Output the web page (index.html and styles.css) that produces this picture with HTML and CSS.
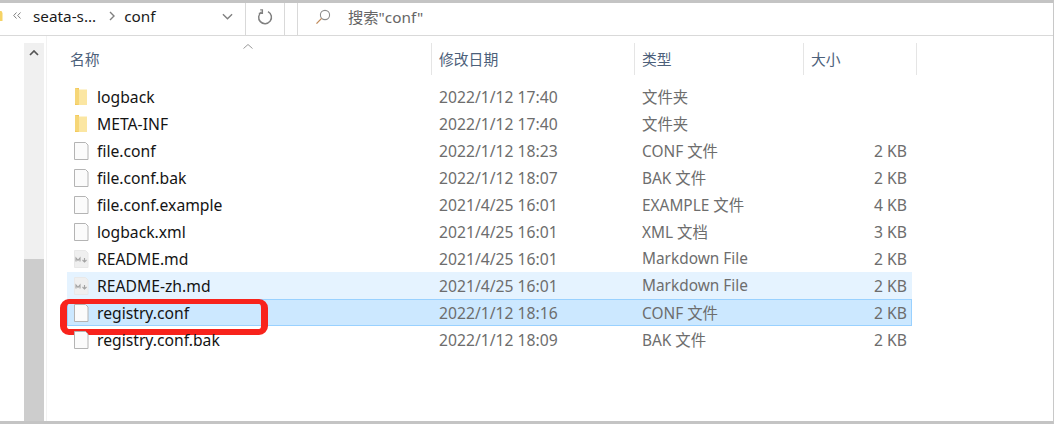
FILE: index.html
```html
<!DOCTYPE html>
<html lang="zh-CN">
<head>
<meta charset="utf-8">
<title>conf</title>
<link rel="stylesheet" href="styles.css">
</head>
<body>
<div class="window">
  <div class="toolbar">
    <div class="address">
      <svg class="crumb-folder" width="3" height="10" viewBox="0 0 3 10"><path d="M0 0h1.500l1 2V10H0z" fill="#f6d365"/></svg>
      <svg class="chev-double" width="8" height="7" viewBox="0 0 8 7"><path d="M3.500.500L.7 3.500l2.800 3M7.500.500L4.700 3.500l2.800 3" fill="none" stroke="#808080"/></svg>
      <span class="crumb">seata-s...</span>
      <svg class="crumb-sep" width="6" height="10" viewBox="0 0 6 10"><path d="M1 1l4 4-4 4" fill="none" stroke="#808080" stroke-width="1.400"/></svg>
      <span class="crumb crumb-last">conf</span>
      <svg class="dropdown" width="12" height="8" viewBox="0 0 12 8"><path d="M1 1l5 5 5-5" fill="none" stroke="#808080" stroke-width="1.500"/></svg>
    </div>
    <div class="refresh">
      <svg width="16" height="16" viewBox="0 0 16 16"><path d="M4.600 2.900A6.400 6.400 0 1 0 11 2.600" fill="none" stroke="#808080" stroke-width="1.500"/><path d="M3.200 0.800h2.200v3.600H1.800" fill="none" stroke="#808080" stroke-width="1.300"/></svg>
    </div>
    <div class="search">
      <svg width="16" height="16" viewBox="0 0 16 16"><circle cx="10" cy="6" r="4.600" fill="none" stroke="#8c8c8c" stroke-width="1.100"/><path d="M6.600 9.400L1.500 14.600" stroke="#c08a5a" stroke-width="1.300"/></svg>
      <span class="search-text">搜索"conf"</span>
    </div>
  </div>
  <div class="content">
    <div class="scrollbar">
      <svg class="scroll-up" width="10" height="6" viewBox="0 0 10 6"><path d="M1 5l4-4 4 4" fill="none" stroke="#555" stroke-width="1.700"/></svg>
      <div class="scroll-thumb"></div>
    </div>
    <div class="list">
      <div class="sort-mark"><svg width="10" height="5" viewBox="0 0 10 5"><path d="M.5 4.500L5 .5l4.500 4" fill="none" stroke="#9a9a9a"/></svg></div>
      <div class="header">
        <div class="hcell hname">名称</div>
        <div class="hcell hdate">修改日期</div>
        <div class="hcell htype">类型</div>
        <div class="hcell hsize">大小</div>
      </div>
      <div class="rows">
        <div class="row">
          <svg class="icon" width="16" height="18" viewBox="0 0 16 18"><path d="M2 0h4v17H2z" fill="#f3c95a"/><path d="M6 1.500h8V17H6z" fill="#fbe6a2"/><path d="M2 0l4 1.500V17l-4-1.500z" fill="#f6d677"/></svg>
          <span class="name">logback</span><span class="date">2022/1/12 17:40</span><span class="type">文件夹</span><span class="size"></span>
        </div>
        <div class="row">
          <svg class="icon" width="16" height="18" viewBox="0 0 16 18"><path d="M2 0h4v17H2z" fill="#f3c95a"/><path d="M6 1.500h8V17H6z" fill="#fbe6a2"/><path d="M2 0l4 1.500V17l-4-1.500z" fill="#f6d677"/></svg>
          <span class="name">META-INF</span><span class="date">2022/1/12 17:40</span><span class="type">文件夹</span><span class="size"></span>
        </div>
        <div class="row">
          <svg class="icon" width="16" height="18" viewBox="0 0 16 18"><path d="M1.500.500h11l2.500 2.500v14.500h-13.500z" fill="#fbfbfb" stroke="#b4b4b4"/></svg>
          <span class="name">file.conf</span><span class="date">2022/1/12 18:23</span><span class="type">CONF 文件</span><span class="size">2 KB</span>
        </div>
        <div class="row">
          <svg class="icon" width="16" height="18" viewBox="0 0 16 18"><path d="M1.500.500h11l2.500 2.500v14.500h-13.500z" fill="#fbfbfb" stroke="#b4b4b4"/></svg>
          <span class="name">file.conf.bak</span><span class="date">2022/1/12 18:07</span><span class="type">BAK 文件</span><span class="size">2 KB</span>
        </div>
        <div class="row">
          <svg class="icon" width="16" height="18" viewBox="0 0 16 18"><path d="M1.500.500h11l2.500 2.500v14.500h-13.500z" fill="#fbfbfb" stroke="#b4b4b4"/></svg>
          <span class="name">file.conf.example</span><span class="date">2021/4/25 16:01</span><span class="type">EXAMPLE 文件</span><span class="size">4 KB</span>
        </div>
        <div class="row">
          <svg class="icon" width="16" height="18" viewBox="0 0 16 18"><path d="M1.500.500h11l2.500 2.500v14.500h-13.500z" fill="#fbfbfb" stroke="#b4b4b4"/></svg>
          <span class="name">logback.xml</span><span class="date">2021/4/25 16:01</span><span class="type">XML 文档</span><span class="size">3 KB</span>
        </div>
        <div class="row">
          <svg class="icon" width="16" height="18" viewBox="0 0 16 18"><path d="M1.500.500h11l2.500 2.500v14.500h-13.500z" fill="#efefef" stroke="#e8e8e8"/><path d="M3 11.500V8l2 2.300L7 8v3.500M11.500 8v3.500M9.500 10l2 2 2-2" fill="none" stroke="#a3a3a3" stroke-width="1.100"/></svg>
          <span class="name">README.md</span><span class="date">2021/4/25 16:01</span><span class="type">Markdown File</span><span class="size">2 KB</span>
        </div>
        <div class="row row-hover">
          <svg class="icon" width="16" height="18" viewBox="0 0 16 18"><path d="M1.500.500h11l2.500 2.500v14.500h-13.500z" fill="#efefef" stroke="#e8e8e8"/><path d="M3 11.500V8l2 2.300L7 8v3.500M11.500 8v3.500M9.500 10l2 2 2-2" fill="none" stroke="#a3a3a3" stroke-width="1.100"/></svg>
          <span class="name">README-zh.md</span><span class="date">2021/4/25 16:01</span><span class="type">Markdown File</span><span class="size">2 KB</span>
        </div>
        <div class="row row-selected">
          <svg class="icon" width="16" height="18" viewBox="0 0 16 18"><path d="M1.500.500h11l2.500 2.500v14.500h-13.500z" fill="#fbfbfb" stroke="#b4b4b4"/></svg>
          <span class="name">registry.conf</span><span class="date">2022/1/12 18:16</span><span class="type">CONF 文件</span><span class="size">2 KB</span>
          <div class="highlight"></div>
        </div>
        <div class="row">
          <svg class="icon" width="16" height="18" viewBox="0 0 16 18"><path d="M1.500.500h11l2.500 2.500v14.500h-13.500z" fill="#fbfbfb" stroke="#b4b4b4"/></svg>
          <span class="name">registry.conf.bak</span><span class="date">2022/1/12 18:09</span><span class="type">BAK 文件</span><span class="size">2 KB</span>
        </div>
      </div>
    </div>
  </div>
</div>
</body>
</html>
```

FILE: styles.css
```css
* { box-sizing: border-box; }
html, body { margin: 0; padding: 0; height: 100%; overflow: hidden; background: #fff; }
body { font-family: "Noto Sans", "Noto Sans CJK SC", sans-serif; font-size: 15.7px; }

.window {
  height: 424px;
  border-top: 3px solid #c4c4c4;
  border-right: 1px solid #c8c8c8;
  border-bottom: 3px solid #c4c4c4;
  display: flex;
  flex-direction: column;
}

.toolbar {
  height: 33px;
  flex: none;
  display: flex;
  border-bottom: 1px solid #d9d9d9;
}
.address {
  width: 246px;
  display: flex;
  align-items: center;
  padding-bottom: 7px;
  border-right: 1px solid #d9d9d9;
}
.crumb-folder { margin-right: 10px; }
.chev-double { margin-right: 12px; }
.crumb { color: #1a1a1a; line-height: 26px; font-size: 15.300px; }
.crumb-sep { margin: 0 9px 0 13px; }
.dropdown { margin: 3px 12px 0 auto; width: 11px; }
.refresh {
  width: 39px;
  display: flex;
  align-items: center;
  justify-content: center;
  padding-bottom: 4px;
  border-right: 1px solid #d9d9d9;
}
.search {
  margin-left: 12px;
  flex: 1;
  border-left: 1px solid #d9d9d9;
  display: flex;
  align-items: center;
  padding-left: 17px;
  padding-bottom: 4px;
}
.search-text { color: #666; margin: 0 0 3px 17px; font-size: 15.300px; }

.content {
  flex: 1;
  display: flex;
  padding-left: 24px;
  min-height: 0;
}
.scrollbar {
  width: 20px;
  margin-top: 7px;
  background: #f0f0f0;
  display: flex;
  flex-direction: column;
  align-items: center;
  flex: none;
}
.scroll-up { margin-top: 7px; }
.scroll-thumb {
  margin-top: auto;
  width: 100%;
  height: 162px;
  background: #cdcdcd;
}

.list {
  flex: 1;
  position: relative;
  padding-left: 20px;
  padding-top: 7px;
  border-left: 1px solid #f2f2f2;
  margin-left: 2px;
}
.sort-mark {
  position: absolute;
  left: 196px;
  top: 7px;
  line-height: 0;
}
.header {
  display: grid;
  grid-template-columns: 365px 203px 169px 113px;
  height: 32px;
  width: 850px;
}
.hcell {
  color: #4c607a;
  display: flex;
  align-items: center;
  padding-bottom: 2px;
  border-right: 1px solid #e5e5e5;
  font-size: 14.800px;
}
.hname { padding-left: 3px; }
.hdate, .htype, .hsize { padding-left: 7px; }

.rows { margin-top: 8px; width: 845px; }
.row {
  height: 27px;
  display: grid;
  grid-template-columns: 8px 18px 338px 203px 169px 104px;
  align-items: center;
  position: relative;
}
.row .icon { grid-column: 2; margin-left: -2px; }
.name { color: #141414; grid-column: 3; padding-left: 4px; }
.date { color: #6d6d6d; grid-column: 4; padding-left: 8px; }
.type { color: #6d6d6d; grid-column: 5; padding-left: 8px; font-size: 15.400px; }
.size { color: #6d6d6d; grid-column: 6; text-align: right; }

.row-hover { background: #e5f3ff; }
.row-selected { background: #cce8ff; outline: 1px solid #99d1ff; outline-offset: -1px; }
.highlight {
  position: absolute;
  left: -7px;
  top: 0;
  width: 208px;
  height: 36px;
  border-style: solid;
  border-color: #f8231c;
  border-width: 5px 7px 6px;
  border-radius: 9px;
}
```
